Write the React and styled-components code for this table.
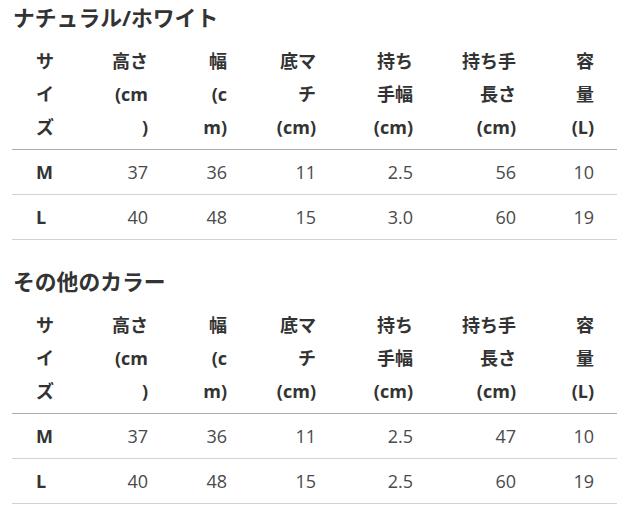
import React from "react";
import styled, { createGlobalStyle } from "styled-components";

const GlobalStyle = createGlobalStyle`
  html, body { margin: 0; padding: 0; background: #fff; }
  body {
    font-family: "Open Sans", "Noto Sans CJK JP", sans-serif;
    color: #333;
  }
`;

const Page = styled.div`
  padding: 0 17px 0 12px;
  width: 605px;
`;

const Section = styled.section`
  & + & { margin-top: 24px; }
`;

const Heading = styled.h3`
  margin: 0 0 4px 1px;
  font-size: 21.8px;
  line-height: 36px;
  font-weight: 700;
  color: #333;
`;

const Table = styled.table`
  width: 605px;
  border-collapse: collapse;
  table-layout: fixed;
  font-size: 18px;
  line-height: 33px;
`;

const HeadCell = styled.th`
  padding: 5px 23px 5px ${(p) => (p.$first ? "24px" : "0")};
  text-align: ${(p) => (p.$first ? "left" : "right")};
  font-weight: 700;
  color: #333;
  vertical-align: bottom;
  border-bottom: 1px solid #ababab;
  white-space: nowrap;
`;

const Row = styled.tr`
  border-bottom: 1px solid #d2d2d2;
`;

const Cell = styled.td`
  padding: 5.5px 23px 5.5px ${(p) => (p.$first ? "24px" : "0")};
  text-align: ${(p) => (p.$first ? "left" : "right")};
  font-weight: ${(p) => (p.$first ? 700 : 400)};
  color: ${(p) => (p.$first ? "#333" : "#4a4a4a")};
`;

const Line = styled.span`
  display: block;
`;

const widths = [77, 82, 79, 89, 97, 103, 78];

const headers = [
  ["サ", "イ", "ズ"],
  ["高さ", "(cm", ")"],
  ["幅", "(c", "m)"],
  ["底マ", "チ", "(cm)"],
  ["持ち", "手幅", "(cm)"],
  ["持ち手", "長さ", "(cm)"],
  ["容", "量", "(L)"],
];

const sections = [
  {
    title: "ナチュラル/ホワイト",
    rows: [
      ["M", "37", "36", "11", "2.5", "56", "10"],
      ["L", "40", "48", "15", "3.0", "60", "19"],
    ],
  },
  {
    title: "その他のカラー",
    rows: [
      ["M", "37", "36", "11", "2.5", "47", "10"],
      ["L", "40", "48", "15", "2.5", "60", "19"],
    ],
  },
];

function SizeTable({ rows }) {
  return (
    <Table>
      <colgroup>
        {widths.map((w, i) => (
          <col key={i} style={{ width: w }} />
        ))}
      </colgroup>
      <thead>
        <tr>
          {headers.map((lines, i) => (
            <HeadCell key={i} $first={i === 0}>
              {lines.map((l, j) => (
                <Line key={j}>{l}</Line>
              ))}
            </HeadCell>
          ))}
        </tr>
      </thead>
      <tbody>
        {rows.map((r, i) => (
          <Row key={i}>
            {r.map((v, j) => (
              <Cell key={j} $first={j === 0}>
                {v}
              </Cell>
            ))}
          </Row>
        ))}
      </tbody>
    </Table>
  );
}

export default function App() {
  return (
    <>
      <GlobalStyle />
      <Page>
        {sections.map((s, i) => (
          <Section key={i}>
            <Heading>{s.title}</Heading>
            <SizeTable rows={s.rows} />
          </Section>
        ))}
      </Page>
    </>
  );
}
